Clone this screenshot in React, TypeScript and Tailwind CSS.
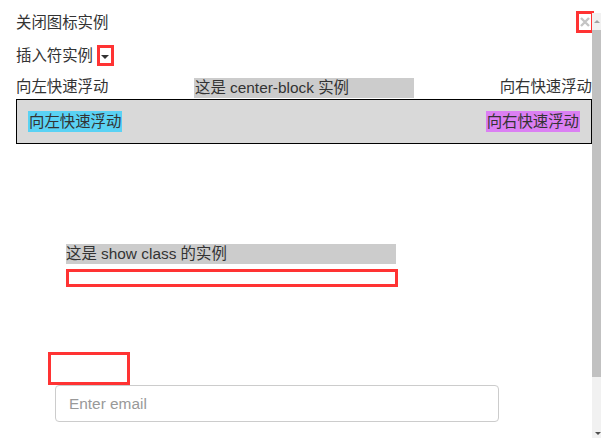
export default function App() {
  const font = "font-['Liberation_Sans','Noto_Sans_CJK_SC',sans-serif]"
  return (
    <div className={`flex h-[438px] w-[601px] overflow-hidden bg-white text-[15.4px] leading-[20px] text-[#333] ${font}`}>
      <main className="flex flex-1 flex-col pl-[16px]">
        <div className="flex items-start justify-between pt-[11px]">
          <span className="mt-[2px]">关闭图标实例</span>
          <button className="-mr-[2px] flex h-[22px] w-[18px] items-center justify-center border-[3px] border-[#f33]">
            <svg width="10" height="10" viewBox="0 0 10 10">
              <path d="M1 1L9 9M9 1L1 9" stroke="#c4c4c4" strokeWidth="2.4" />
            </svg>
          </button>
        </div>

        <div className="mt-[12px] flex h-[21px] items-center">
          <span>插入符实例</span>
          <span className="ml-[4px] flex h-[21px] w-[17px] items-center justify-center border-[3px] border-[#f33] pt-[2px]">
            <span className="h-0 w-0 border-x-[4px] border-t-[4px] border-x-transparent border-t-[#333]" />
          </span>
        </div>

        <div className="mt-[11px] grid grid-cols-[1fr_220px_1fr] items-end">
          <span className="pb-[1px]">向左快速浮动</span>
          <span className="h-[20px] bg-[#ccc] pl-[1px]">这是 center-block 实例</span>
          <span className="pb-[1px] text-right">向右快速浮动</span>
        </div>

        <div className="mt-[1px] flex justify-between border border-black bg-[#d9d9d9] px-[11px] py-[11px]">
          <span className="h-[21px] bg-[#5ad2f4] px-[1px] leading-[21px]">向左快速浮动</span>
          <span className="h-[21px] bg-[#db7ff3] px-[1px] leading-[21px]">向右快速浮动</span>
        </div>

        <div className="ml-[50px] mt-[100px] h-[20px] w-[330px] bg-[#ccc]">这是 show class 的实例</div>
        <div className="ml-[50px] mt-[5px] h-[18px] w-[332px] border-[3px] border-[#f33]" />

        <div className="ml-[32px] mt-[65px] h-[33px] w-[82px] border-[3px] border-[#f33]" />
        <input
          type="email"
          placeholder="Enter email"
          className="ml-[39px] h-[37px] w-[444px] rounded-[4px] border border-[#ccc] px-[13px] text-[15.4px] text-[#555] outline-none placeholder:text-[#999]"
        />
      </main>

      <aside className="mt-[13px] flex w-[9px] flex-col bg-[#f1f1f1]">
        <div className="flex h-[17px] items-center justify-center">
          <span className="h-0 w-0 border-x-[3px] border-b-[3px] border-x-transparent border-b-[#a3a3a3]" />
        </div>
        <div className="h-[347px] bg-[#c1c1c1]" />
        <div className="flex-1" />
        <div className="flex h-[6px] items-start justify-end">
          <span className="h-0 w-0 border-x-[3px] border-t-[3px] border-x-transparent border-t-[#505050]" />
        </div>
      </aside>
    </div>
  )
}
